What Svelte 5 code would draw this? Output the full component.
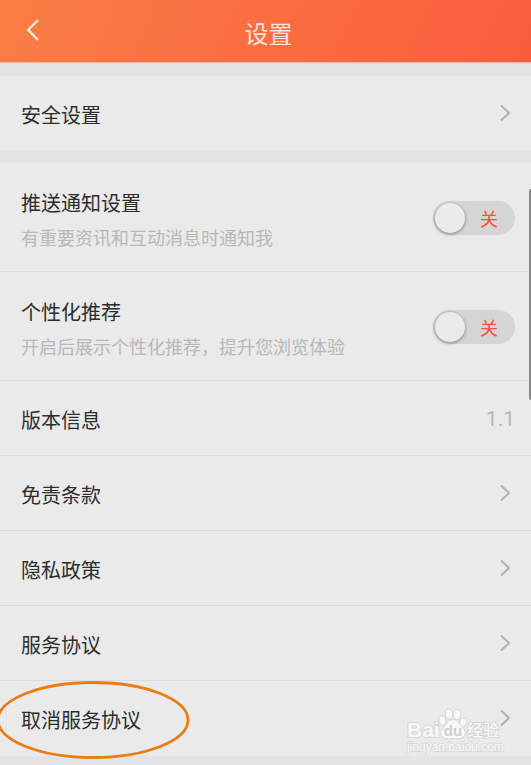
<script lang="ts">
	type Row = { label: string; desc?: string; value?: string; circled?: boolean };

	const groups: Row[][] = [
		[{ label: "安全设置" }],
		[
			{ label: "推送通知设置", desc: "有重要资讯和互动消息时通知我" },
			{ label: "个性化推荐", desc: "开启后展示个性化推荐，提升您浏览体验" },
			{ label: "版本信息", value: "1.1" },
			{ label: "免责条款" },
			{ label: "隐私政策" },
			{ label: "服务协议" },
			{ label: "取消服务协议", circled: true },
		],
	];

	let enabled: Record<string, boolean> = $state({
		推送通知设置: false,
		个性化推荐: false,
	});
</script>

<div class="screen">
	<header>
		<button type="button" class="back" aria-label="返回">
			<svg width="16" height="24" viewBox="0 0 16 24">
				<path d="M13 2.2 3.2 12 13 21.8" />
			</svg>
		</button>
		<h1>设置</h1>
	</header>

	<main>
		{#each groups as rows}
			<section>
				{#each rows as row}
					{#if row.desc}
						<label class="row tall">
							<span class="text">
								<span class="name">{row.label}</span>
								<span class="desc">{row.desc}</span>
							</span>
							<span class="switch">
								<input type="checkbox" role="switch" bind:checked={enabled[row.label]} />
								<span class="knob"></span>
								<span class="state">{enabled[row.label] ? "开" : "关"}</span>
							</span>
						</label>
					{:else if row.value}
						<div class="row">
							<span class="name">{row.label}</span>
							<span class="value">{row.value}</span>
						</div>
					{:else}
						<a class="row" href="#{row.label}">
							<span class="name">{row.label}</span>
							<svg class="chevron" width="12" height="18" viewBox="0 0 12 18">
								<path d="M2 1.5 10 9l-8 7.5" />
							</svg>
							{#if row.circled}
								<svg class="ring" width="194" height="80" viewBox="0 0 194 80">
									<ellipse cx="97" cy="40" rx="95" ry="37.5" />
								</svg>
							{/if}
						</a>
					{/if}
				{/each}
			</section>
		{/each}
	</main>

	<div class="scrollbar"></div>

	<svg class="watermark" width="100" height="54" viewBox="0 0 100 54">
		<g class="mark">
			<text x="1" y="34" font-size="21" font-weight="700">Bai</text>
			<ellipse cx="36.5" cy="17.500" rx="3" ry="4.3" transform="rotate(-12 36.5 17.5)" />
			<ellipse cx="43" cy="11" rx="3.2" ry="4.6" transform="rotate(-4 43 11)" />
			<ellipse cx="51" cy="11.5" rx="3.2" ry="4.6" transform="rotate(12 51 11.5)" />
			<ellipse cx="57" cy="19.5" rx="3" ry="4.3" transform="rotate(20 57 19.5)" />
			<path d="M47 17c4 0 5.500 3 7.500 5.500 2.500 3 5 5 4 9-1 4-5 4-11.500 3.500-6.500.5-10.500.5-11.500-3.500-1-4 1.500-6 4-9 2-2.500 3.500-5.500 7.500-5.500z" />
			<text x="61" y="33" font-size="16" font-weight="500">经验</text>
		</g>
		<text class="du" x="47" y="33" font-size="15" font-weight="700" text-anchor="middle">du</text>
		<text class="site" x="1" y="48" font-size="12">jingyan.baidu.com</text>
	</svg>
</div>

<style>
	:global(body) {
		margin: 0;
		background: #e4e4e6;
	}
	.screen {
		position: relative;
		min-height: 100vh;
		overflow: hidden;
		background: #e4e4e6;
		color: #2d2d2d;
		font-family: Roboto, "Noto Sans CJK SC", sans-serif;
	}
	header {
		display: grid;
		grid-template-columns: 70px 1fr 64px;
		height: 62px;
		background: linear-gradient(115deg, #f97e45, #fb5d3c);
		border-bottom: 1px solid #f3b6a2;
	}
	.back {
		display: flex;
		align-items: center;
		padding: 0 0 2px 25px;
		border: 0;
		background: none;
	}
	.back path {
		fill: none;
		stroke: #f3e6e1;
		stroke-width: 2.4;
	}
	h1 {
		margin: 0;
		padding-top: 8px;
		color: #f3e4de;
		font-size: 24px;
		font-weight: 400;
		line-height: 54px;
		text-align: center;
	}
	main {
		display: flex;
		flex-direction: column;
		gap: 12px;
		padding: 13px 0 10px;
	}
	section {
		background: #eaeaea;
	}
	.row {
		position: relative;
		display: flex;
		align-items: center;
		justify-content: space-between;
		box-sizing: border-box;
		min-height: 75px;
		padding: 0 16px 0 21px;
		border-bottom: 1px solid #dcdcdc;
		color: inherit;
		text-decoration: none;
	}
	.row:last-child {
		border-bottom-color: transparent;
	}
	.tall {
		min-height: 109px;
		padding-top: 1px;
	}
	.text {
		display: flex;
		flex-direction: column;
		gap: 8px;
		padding-top: 4px;
	}
	.name {
		font-size: 20px;
		line-height: 30px;
	}
	.row > .name {
		padding-top: 5px;
	}
	.desc {
		color: #b8b8b8;
		font-size: 18px;
		line-height: 24px;
	}
	.value {
		padding-top: 2px;
		color: #b6b6b6;
		font-size: 21px;
		line-height: 30px;
	}
	.chevron {
		margin-right: 4px;
	}
	.chevron path {
		fill: none;
		stroke: #b2b2b2;
		stroke-width: 2;
	}
	.switch {
		position: relative;
		display: flex;
		align-items: center;
		justify-content: space-between;
		box-sizing: border-box;
		width: 82px;
		height: 34px;
		padding: 0 17px 0 2px;
		border-radius: 17px;
		background: #d5d5d5;
	}
	.switch input {
		position: absolute;
		inset: 0;
		width: 100%;
		height: 100%;
		margin: 0;
		opacity: 0;
	}
	.knob {
		width: 30px;
		height: 30px;
		border-radius: 50%;
		background: #ebebeb;
		box-shadow: 0 1px 3px 1px rgba(0, 0, 0, 0.25);
	}
	.switch:has(input:checked) {
		flex-direction: row-reverse;
		padding: 0 2px 0 17px;
	}
	.state {
		padding-top: 4px;
		color: #f5503a;
		font-size: 18px;
		line-height: 30px;
	}
	.ring {
		position: absolute;
		top: -1px;
		left: -4px;
		z-index: 1;
	}
	.ring ellipse {
		fill: none;
		stroke: #e87d12;
		stroke-width: 2.8;
	}
	.scrollbar {
		position: absolute;
		top: 189px;
		right: 0;
		width: 2px;
		height: 211px;
		border-radius: 2px 0 0 2px;
		background: #888;
	}
	.watermark {
		position: absolute;
		right: 25px;
		top: 703px;
		font-family: "Liberation Sans", "Noto Sans CJK SC", sans-serif;
		pointer-events: none;
	}
	.mark {
		fill: #f8f8f8;
		stroke: #d6d6d6;
		stroke-width: 2;
		paint-order: stroke;
	}
	.du {
		fill: #cecece;
	}
	.site {
		fill: #f8f8f8;
		stroke: #dcdcdc;
		stroke-width: 2;
		paint-order: stroke;
	}
</style>
